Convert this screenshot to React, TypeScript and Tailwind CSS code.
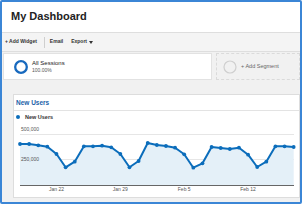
const ys = [
  145, 145, 146.3, 147.7, 155, 168.3, 162.7, 147.3, 147.3, 146.7, 148.3, 155, 168.3, 162, 144, 146, 147, 148.7,
  155.3, 168.7, 164.3, 148, 149, 150, 148.7, 155.7, 168, 162.7, 147.3, 147.3, 148,
];

const points = ys.map((y, i) => [6 + i * 9.123, y - 124] as const);
const linePath = points.map(([x, y]) => `${x.toFixed(1)},${y.toFixed(1)}`).join(' ');
const fillPath = `6,62 ${linePath} ${points[points.length - 1][0].toFixed(1)},62`;

const ticks = [
  { label: 'Jan 22', i: 4 },
  { label: 'Jan 29', i: 11 },
  { label: 'Feb 5', i: 18 },
  { label: 'Feb 12', i: 25 },
];

function Chart() {
  return (
    <svg width={284} height={72} className="block" style={{ fontFamily: '"Liberation Sans", Arial, sans-serif' }}>
      <line x1={6} x2={280} y1={11.5} y2={11.5} stroke="#e6e6e6" strokeWidth={1} />
      <line x1={6} x2={280} y1={36.5} y2={36.5} stroke="#e6e6e6" strokeWidth={1} />
      <polygon points={fillPath} fill="#e4f0f8" />
      <line x1={6} x2={280} y1={62.5} y2={62.5} stroke="#666" strokeWidth={1} />
      <text x={7} y={8} fontSize={5} fill="#555">
        500,000
      </text>
      <text x={7} y={37.5} fontSize={5} fill="#555">
        250,000
      </text>
      <polyline points={linePath} fill="none" stroke="#0b6dbb" strokeWidth={2} strokeLinejoin="round" />
      {points.map(([x, y], i) => (
        <circle key={i} cx={x} cy={y} r={1.9} fill="#0b6dbb" />
      ))}
      {ticks.map((t) => (
        <text key={t.label} x={points[t.i][0]} y={68} fontSize={5} fill="#555" textAnchor="middle">
          {t.label}
        </text>
      ))}
    </svg>
  );
}

export default function App() {
  return (
    <div className="w-[302px] h-[204px] overflow-hidden rounded-[2px] border-2 border-[#3b86d6] bg-[#f1f1f1] font-['Liberation_Sans',Arial,sans-serif] flex flex-col">
      <div className="h-[30px] shrink-0 bg-white pl-[9px] pt-[9px] text-[11px] font-bold leading-none text-[#222]">
        My Dashboard
      </div>
      <div className="flex h-[20px] shrink-0 items-center border-y border-[#dedede] bg-[#f4f4f4] pl-[3px] text-[5px] font-bold text-[#333]">
        <span>+ Add Widget</span>
        <span className="ml-[7px] h-[11px] w-px bg-[#cfcfcf]" />
        <span className="ml-[5px]">Email</span>
        <span className="ml-[8px] flex items-center">
          Export
          <svg width={4} height={3} className="ml-[2px]">
            <polygon points="0,0 4,0 2,3" fill="#333" />
          </svg>
        </span>
      </div>
      <div className="flex shrink-0 pl-[1px] pt-[1px]">
        <div className="flex h-[27px] w-[209px] items-center border border-[#e2e2e2] bg-white">
          <svg width={14} height={14} className="ml-[10px]">
            <circle cx={7} cy={7} r={5.8} fill="none" stroke="#1769be" strokeWidth={2.3} />
          </svg>
          <div className="ml-[4px] flex flex-col">
            <span className="text-[6px] leading-[7px] text-[#222]">All Sessions</span>
            <span className="text-[5px] leading-[7px] text-[#555]">100.00%</span>
          </div>
        </div>
        <div className="ml-[4px] flex h-[27px] flex-1 items-center border border-dashed border-[#dadada]">
          <svg width={14} height={14} className="ml-[6px]">
            <circle cx={7} cy={7} r={6} fill="none" stroke="#cfcfcf" strokeWidth={1.2} />
          </svg>
          <span className="ml-[4px] text-[5.5px] text-[#666]">+ Add Segment</span>
        </div>
      </div>
      <div className="ml-[11px] mt-[14px] flex h-[104px] shrink-0 flex-col border border-[#dddddd] bg-white">
        <div className="flex h-[16px] items-center border-b border-[#e3e3e3] pl-[2px] text-[6.5px] font-bold text-[#1c5fa8]">
          New Users
        </div>
        <div className="flex h-[12px] items-center pl-[2px]">
          <span className="h-[4px] w-[4px] rounded-full bg-[#0b6dbb]" />
          <span className="ml-[5px] text-[5.5px] font-bold text-[#333]">New Users</span>
        </div>
        <Chart />
      </div>
    </div>
  );
}
